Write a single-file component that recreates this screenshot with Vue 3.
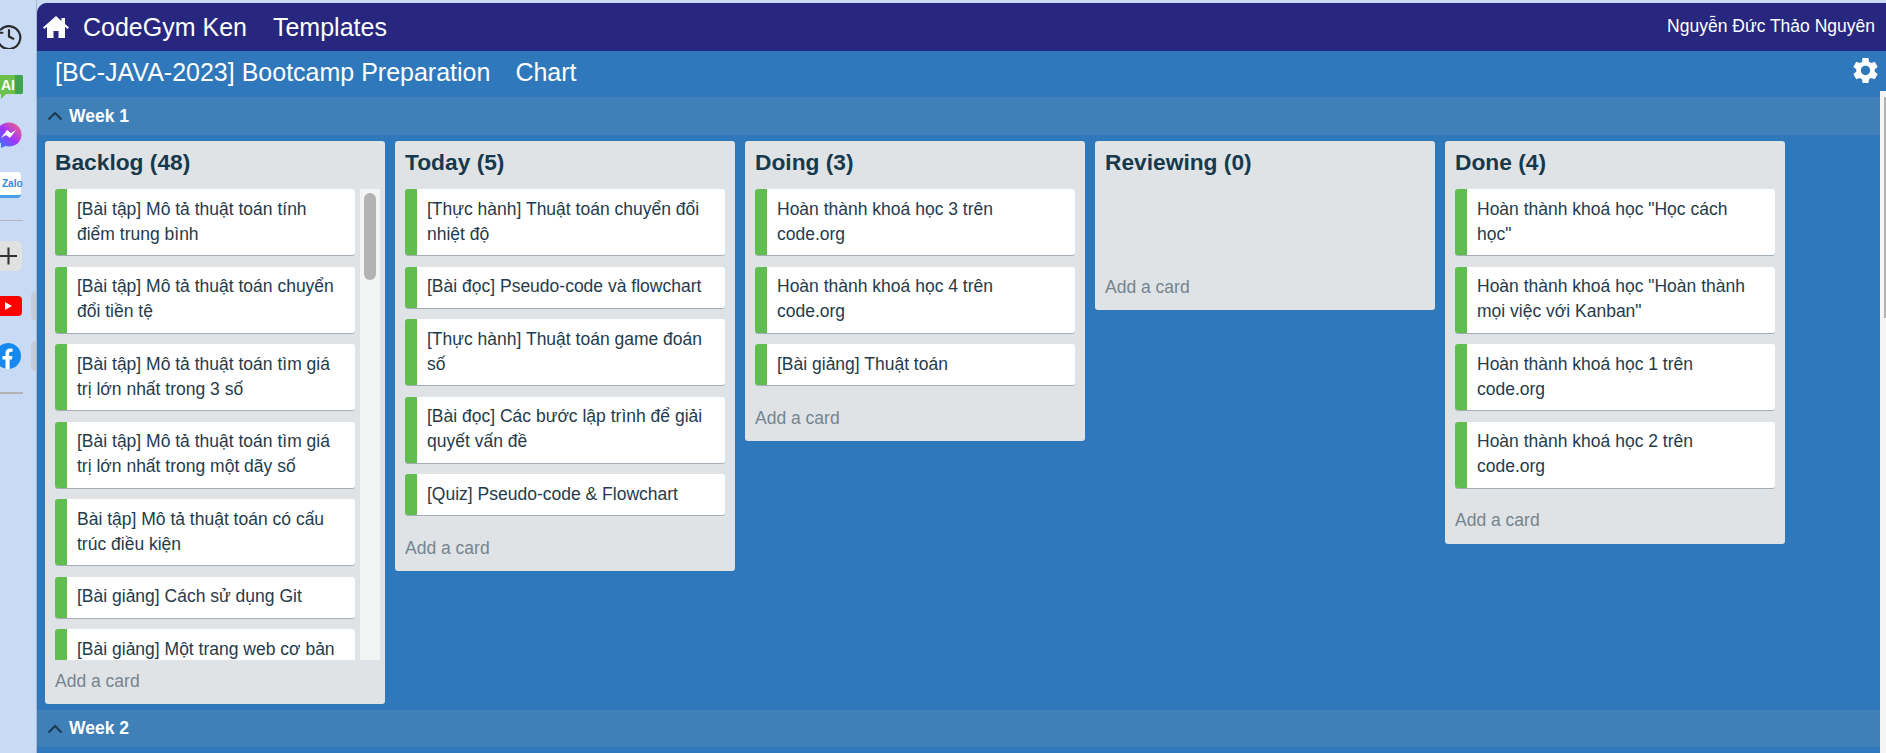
<script setup>
const lists = [
  {
    title: 'Backlog (48)',
    scroll: true,
    cards: [
      '[Bài tập] Mô tả thuật toán tính điểm trung bình',
      '[Bài tập] Mô tả thuật toán chuyển đổi tiền tệ',
      '[Bài tập] Mô tả thuật toán tìm giá trị lớn nhất trong 3 số',
      '[Bài tập] Mô tả thuật toán tìm giá trị lớn nhất trong một dãy số',
      'Bài tập] Mô tả thuật toán có cấu trúc điều kiện',
      '[Bài giảng] Cách sử dụng Git',
      '[Bài giảng] Một trang web cơ bản',
    ],
  },
  {
    title: 'Today (5)',
    cards: [
      '[Thực hành] Thuật toán chuyển đổi nhiệt độ',
      '[Bài đọc] Pseudo-code và flowchart',
      '[Thực hành] Thuật toán game đoán số',
      '[Bài đọc] Các bước lập trình để giải quyết vấn đề',
      '[Quiz] Pseudo-code & Flowchart',
    ],
  },
  {
    title: 'Doing (3)',
    cards: [
      'Hoàn thành khoá học 3 trên code.org',
      'Hoàn thành khoá học 4 trên code.org',
      '[Bài giảng] Thuật toán',
    ],
  },
  { title: 'Reviewing (0)', cards: [] },
  {
    title: 'Done (4)',
    cards: [
      'Hoàn thành khoá học "Học cách học"',
      'Hoàn thành khoá học "Hoàn thành mọi việc với Kanban"',
      'Hoàn thành khoá học 1 trên code.org',
      'Hoàn thành khoá học 2 trên code.org',
    ],
  },
]
</script>

<template>
  <div class="page">
    <aside class="sidebar">
      <div class="side-item history">
        <svg width="26" height="26" viewBox="0 0 24 24" fill="none" stroke="#2b2b2b" stroke-width="2" stroke-linecap="round">
          <path d="M4.500 6A10.500 10.500 0 1 1 1.500 12" />
          <path d="M1.500 4.500v4.500h4.500" stroke-width="1.800" />
          <path d="M12 6.500v6l4 2" />
        </svg>
      </div>
      <div class="side-item ai">
        <svg width="26" height="26" viewBox="0 0 26 26">
          <path d="M-4 1h25a2 2 0 0 1 2 2v15a2 2 0 0 1-2 2H6l-5 5v-5h-5z" fill="#6cc04a" />
          <path d="M15 1h6a2 2 0 0 1 2 2v15a2 2 0 0 1-2 2h-6z" fill="#3fa350" />
        </svg>
        <span class="ai-label">AI</span>
      </div>
      <div class="side-item messenger">
        <svg width="26" height="26" viewBox="0 0 26 26">
          <defs>
            <linearGradient id="msg" x1="0" y1="1" x2="1" y2="0">
              <stop offset="0" stop-color="#1e8cff" />
              <stop offset="0.5" stop-color="#a033ff" />
              <stop offset="1" stop-color="#ff6a68" />
            </linearGradient>
          </defs>
          <path d="M9 0.500c7 0 12.500 5 12.500 12S16 24.500 9 24.500c-1.300 0-2.500-.2-3.600-.5L1 26v-4.500C-2 19-3.500 16-3.500 12.500-3.500 5.500 2 .5 9 .5z" fill="url(#msg)" />
          <path d="M1 16l6-8 4 3 5-3-6 8-4-3z" fill="#fff" />
        </svg>
      </div>
      <div class="side-item zalo">
        <div class="zalo-tile">Zalo</div>
      </div>
      <hr class="side-rule" />
      <div class="side-item add-tile">
        <svg width="18" height="18" viewBox="0 0 18 18" stroke="#333" stroke-width="2.200">
          <path d="M9 0v18M-4 9h22" />
        </svg>
      </div>
      <div class="side-item youtube">
        <svg width="26" height="20" viewBox="0 0 26 20">
          <rect x="-4" y="0" width="26" height="20" rx="4" fill="#f00" />
          <path d="M5 6l7 4-7 4z" fill="#fff" />
        </svg>
        <span class="handle"></span>
      </div>
      <div class="side-item facebook">
        <svg width="26" height="26" viewBox="0 0 26 26">
          <circle cx="8" cy="13" r="13" fill="#1589f0" />
          <path d="M5.500 26v-9.500H2.500V13h3v-2.800c0-3 1.800-4.700 4.500-4.700 1.300 0 2.600.2 2.600.2v3h-1.500c-1.500 0-2 .9-2 1.900V13h3.300l-.5 3.500H9.600V26z" fill="#fff" />
        </svg>
        <span class="handle"></span>
      </div>
      <hr class="side-rule last" />
    </aside>

    <main class="board">
      <nav class="topnav">
        <svg class="home" width="26" height="22" viewBox="0 0 26 22" fill="#fff">
          <path d="M13 0 0 11.500l1.500 1.500L4 10.800V22h6.500v-7h5v7H22V10.800l2.500 2.200 1.500-1.500-4-3.500V2h-3.500v3.100z" />
        </svg>
        <a class="brand">CodeGym Ken</a>
        <a class="brand">Templates</a>
        <span class="user">Nguyễn Đức Thảo Nguyên</span>
      </nav>

      <header class="subnav">
        <span>[BC-JAVA-2023] Bootcamp Preparation</span>
        <span>Chart</span>
        <svg class="gear" width="31" height="31" viewBox="0 0 24 24" fill="#fff">
          <path d="M19.140 12.940c.04-.3.06-.61.06-.94 0-.32-.02-.64-.07-.94l2.030-1.580a.49.49 0 0 0 .12-.61l-1.920-3.320a.488.488 0 0 0-.59-.22l-2.390.96c-.5-.38-1.030-.7-1.620-.94l-.36-2.540a.484.484 0 0 0-.48-.41h-3.840c-.24 0-.43.17-.47.41l-.36 2.540c-.59.24-1.130.57-1.620.94l-2.390-.96c-.22-.08-.47 0-.59.22L2.740 8.870c-.12.21-.08.47.12.61l2.030 1.580c-.05.3-.09.63-.09.94s.02.64.07.94l-2.030 1.580a.49.49 0 0 0-.12.61l1.920 3.320c.12.22.37.29.59.22l2.390-.96c.5.38 1.030.7 1.620.94l.36 2.540c.05.24.24.41.48.41h3.840c.24 0 .44-.17.47-.41l.36-2.540c.59-.24 1.130-.56 1.620-.94l2.390.96c.22.08.47 0 .59-.22l1.920-3.320c.12-.22.07-.47-.12-.61l-2.010-1.580zM12 15.600c-1.980 0-3.600-1.620-3.600-3.600s1.620-3.600 3.600-3.600 3.600 1.620 3.600 3.600-1.620 3.600-3.600 3.600z" />
        </svg>
      </header>

      <div class="content">
        <div class="swimlanes">
          <div class="week">
            <svg class="chevron" width="16" height="10" viewBox="0 0 16 10" fill="none" stroke="#1d3c52" stroke-width="2.200">
              <path d="M1.500 8.500 8 2l6.500 6.500" />
            </svg>
            Week 1
          </div>

          <div class="lists">
            <section v-for="list in lists" :key="list.title" class="list">
              <h2>{{ list.title }}</h2>
              <div class="cards" :class="{ scroll: list.scroll }">
                <div class="card-stack">
                  <article v-for="card in list.cards" :key="card" class="card">{{ card }}</article>
                </div>
                <div v-if="list.scroll" class="list-scrollbar"><div class="list-thumb"></div></div>
              </div>
              <div class="add">Add a card</div>
            </section>
          </div>

          <div class="week second">
            <svg class="chevron" width="16" height="10" viewBox="0 0 16 10" fill="none" stroke="#1d3c52" stroke-width="2.200">
              <path d="M1.500 8.500 8 2l6.500 6.500" />
            </svg>
            Week 2
          </div>
        </div>
        <div class="page-scrollbar"><div class="page-thumb"></div></div>
      </div>
    </main>
  </div>
</template>

<style>
html,
body {
  margin: 0;
  overflow: hidden;
}
</style>

<style scoped>
.page {
  display: flex;
  width: 1886px;
  height: 753px;
  overflow: hidden;
  background: #c9daf5;
  font-family: "Liberation Sans", Arial, sans-serif;
}

.sidebar {
  display: flex;
  flex-direction: column;
  flex: none;
  width: 37px;
  padding-top: 23px;
  box-sizing: border-box;
  overflow: hidden;
  border-right: 1px solid #a9b8cf;
}

.side-item {
  display: flex;
  align-items: center;
  position: relative;
  flex: none;
}

.history {
  height: 26px;
  margin-left: -4px;
}

.ai {
  height: 26px;
  margin-top: 25px;
}

.ai-label {
  position: absolute;
  left: 1px;
  top: 3px;
  font-size: 14px;
  font-weight: bold;
  color: #fff;
}

.messenger {
  height: 26px;
  margin-top: 22px;
}

.zalo {
  height: 26px;
  margin-top: 24px;
}

.zalo-tile {
  width: 21px;
  height: 26px;
  padding-left: 2px;
  border-radius: 0 4px 4px 0;
  border-bottom: 3px solid #4d9ee8;
  box-sizing: border-box;
  background: #fff;
  color: #2f8ae0;
  font-size: 10px;
  font-weight: bold;
  line-height: 23px;
}

.side-rule {
  flex: none;
  width: 23px;
  height: 1px;
  margin: 22px 0 0;
  border: 0;
  background: #b3b3b3;
}

.side-rule.last {
  height: 2px;
  margin-top: 23px;
}

.add-tile {
  justify-content: flex-end;
  width: 22px;
  height: 30px;
  margin-top: 20px;
  padding-right: 5px;
  box-sizing: border-box;
  border-radius: 0 6px 6px 0;
  background: #e1e1e1;
}

.youtube {
  height: 20px;
  margin-top: 25px;
}

.facebook {
  height: 26px;
  margin-top: 27px;
}

.handle {
  position: absolute;
  left: 31px;
  top: -5px;
  width: 6px;
  height: 30px;
  border-radius: 5px 0 0 5px;
  background: #c6cdd8;
}

.facebook .handle {
  top: -2px;
}

.board {
  display: flex;
  flex-direction: column;
  flex: 1;
  min-width: 0;
  margin-top: 3px;
  border-top-left-radius: 10px;
  overflow: hidden;
  background: #2f78bb;
}

.topnav {
  display: flex;
  align-items: center;
  flex: none;
  height: 48px;
  padding: 0 11px 0 6px;
  box-sizing: border-box;
  background: #27277f;
  color: #fff;
}

.home {
  margin-right: 14px;
}

.brand {
  margin-right: 26px;
  font-size: 25px;
}

.user {
  margin-left: auto;
  margin-bottom: 2px;
  font-size: 17.5px;
}

.subnav {
  display: flex;
  align-items: center;
  gap: 25px;
  flex: none;
  height: 46px;
  padding: 0 5px 4px 18px;
  box-sizing: border-box;
  color: #fff;
  font-size: 25px;
}

.gear {
  margin-left: auto;
  margin-bottom: 4px;
}

.content {
  display: flex;
  flex: 1;
  min-height: 0;
}

.swimlanes {
  flex: 1;
  min-width: 0;
}

.week {
  display: flex;
  align-items: center;
  gap: 6px;
  height: 38px;
  padding-left: 10px;
  box-sizing: border-box;
  background: #4080b8;
  color: #fff;
  font-size: 17.5px;
  font-weight: bold;
}

.week.second {
  height: 37px;
}

.lists {
  display: flex;
  align-items: flex-start;
  gap: 10px;
  height: 575px;
  padding: 6px 8px 0;
  box-sizing: border-box;
}

.list {
  flex: none;
  width: 340px;
  padding: 0 10px;
  box-sizing: border-box;
  border-radius: 3px;
  background: #dfe3e6;
}

h2 {
  height: 48px;
  margin: 0;
  font-size: 22.75px;
  font-weight: bold;
  line-height: 43px;
  color: #17394d;
}

.cards {
  display: flex;
  min-height: 76.5px;
}

.cards.scroll {
  height: 470.5px;
  margin-right: -5px;
  overflow: hidden;
}

.card-stack {
  flex: 1;
  min-width: 0;
}

.card {
  margin-bottom: 11.5px;
  padding: 7.5px 16px 8.5px 22px;
  box-sizing: border-box;
  border-radius: 3px;
  background: linear-gradient(to right, #61bd4f 12px, #fff 12px);
  box-shadow: 0 1px 0 #a3adb6;
  font-size: 17.5px;
  line-height: 25px;
  color: #253b4c;
}

.list-scrollbar {
  flex: none;
  width: 20px;
  margin-left: 5px;
  padding: 4px 4px 0;
  box-sizing: border-box;
  background: #f3f4f4;
}

.list-thumb {
  height: 87px;
  border-radius: 6px;
  background: #b3b3b3;
}

.add {
  height: 44.5px;
  font-size: 17.5px;
  line-height: 43px;
  color: #75848f;
}

.page-scrollbar {
  flex: none;
  width: 6px;
  height: calc(100% + 6px);
  margin-top: -6px;
  padding-top: 6px;
  box-sizing: border-box;
  background: #f5f5f5;
}

.page-thumb {
  width: 2px;
  height: 221px;
  margin-left: 4px;
  background: #b3b3b3;
}
</style>
